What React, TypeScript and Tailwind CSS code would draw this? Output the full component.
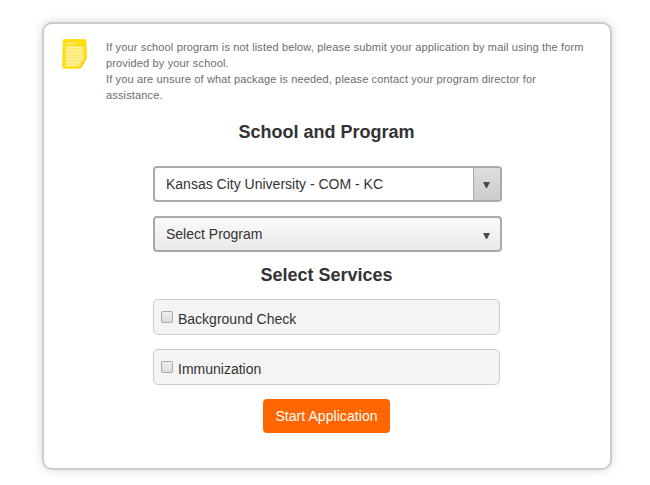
import { useState } from 'react'

const services = ['Background Check', 'Immunization']

function NoteIcon() {
  return (
    <svg width="26" height="30" viewBox="0 0 26 30" aria-hidden="true">
      <path
        d="M1 .3Q13 -.2 24.2 .3Q24.8 9 24.9 19L18.6 29.5Q9 30.2 .4 29.5Q0 14 1 .3Z"
        fill="#ffdd0f"
      />
      <path d="M3.5 7.2H21.6V21L18 27.2H3.5Z" fill="#ffe764" />
      <path
        d="M4 4.5H13M4 8.5H21.3M4 11.5H21.3M4 14.5H21.3M4 17.5H21.3M4 20.5H20.5M4 23.5H18M4 26.5H15.5"
        stroke="#fff3a3"
        strokeWidth="1.4"
      />
      <path d="M18.6 29.5L19.6 24.2L24.9 19Z" fill="#eccb08" />
    </svg>
  )
}

function Arrow() {
  return (
    <svg width="7" height="6" viewBox="0 0 7 6" aria-hidden="true">
      <path d="M0 0H7L4 6H3Z" fill="#50453f" />
    </svg>
  )
}

function ServiceOption({ label }: { label: string }) {
  const [checked, setChecked] = useState(false)

  return (
    <label className="flex h-9 w-[347px] items-start rounded-[5px] border border-[#ccc] bg-[#f4f4f4] pl-[7px]">
      <input
        type="checkbox"
        checked={checked}
        onChange={(e) => setChecked(e.target.checked)}
        className="mt-[11px] size-3 appearance-none rounded-[2px] border border-[#a9a9a9] bg-linear-to-b from-[#ededed] to-[#dcdcdc] checked:bg-[#666]"
      />
      <span className="mt-[9px] ml-[5px] text-[14px] leading-5">{label}</span>
    </label>
  )
}

export default function App() {
  return (
    <div className="flex h-[485px] w-[650px] justify-center bg-white pt-[22px] pl-1 font-['Liberation_Sans',Arial,sans-serif] text-[#333]">
      <main className="flex h-[448px] w-[570px] flex-col rounded-[10px] border-2 border-[#ccc] bg-white shadow-[0_0_10px_#d8d8d8]">
        <div className="flex pt-[15px] pl-[18px]">
          <NoteIcon />
          <p className="ml-[18px] w-[490px] text-[11px] leading-4 tracking-[0.145px] text-[#6c6c6c]">
            If your school program is not listed below, please submit your application by mail using the form
            <br />
            provided by your school.
            <br />
            If you are unsure of what package is needed, please contact your program director for
            <br />
            assistance.
          </p>
        </div>

        <div className="ml-[109px] flex w-[349px] flex-col">
          <h2 className="mt-[19px] -ml-0.5 text-center text-[18px] leading-5 font-bold">School and Program</h2>

          <button
            type="button"
            className="mt-6 flex h-9 overflow-hidden rounded-[4px] border-2 border-[#aaa] bg-white text-left text-[14px]"
          >
            <span className="flex-1 pl-[11px] leading-8">Kansas City University - COM - KC</span>
            <span className="flex h-8 w-[27px] justify-end border-l border-[#aaa] bg-linear-to-b from-[#dedede] to-[#ccc] pt-3.5 pr-2.5">
              <Arrow />
            </span>
          </button>
          <button
            type="button"
            className="mt-3.5 flex h-9 rounded-[4px] border-2 border-[#aaa] bg-linear-to-b from-[#fafafa] to-[#e9e9e9] pr-2.5 text-left text-[14px]"
          >
            <span className="flex-1 pl-[11px] leading-8">Select Program</span>
            <span className="pt-[15px]">
              <Arrow />
            </span>
          </button>

          <h2 className="mt-[13px] -ml-0.5 text-center text-[18px] leading-5 font-bold">Select Services</h2>

          <div className="mt-3.5 flex flex-col gap-3.5">
            {services.map((service) => (
              <ServiceOption key={service} label={service} />
            ))}
          </div>

          <button
            type="button"
            className="mt-3.5 ml-[110px] h-[34px] w-[127px] rounded-[4px] bg-[#ff6600] text-[14px] tracking-[0.06px] text-white"
          >
            Start Application
          </button>
        </div>
      </main>
    </div>
  )
}
